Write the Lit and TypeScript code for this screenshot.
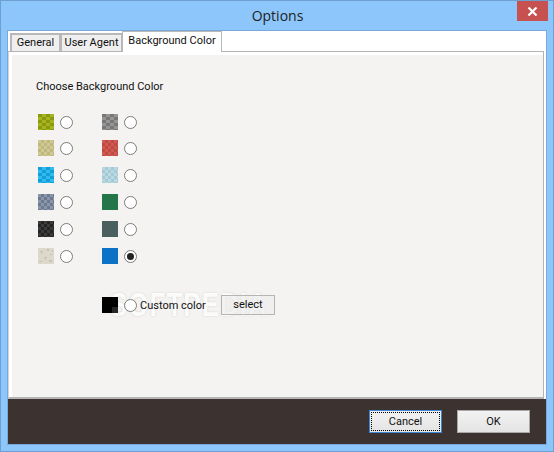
import { LitElement, html, css, svg, nothing } from "lit";
import { customElement } from "lit/decorators.js";

type Sw = { kind: "brick" | "check" | "flat" | "noise"; a: string; b?: string };

const brick = (a: string, b: string): Sw => ({ kind: "brick", a, b });
const check = (a: string, b: string): Sw => ({ kind: "check", a, b });
const flat = (a: string): Sw => ({ kind: "flat", a });

const left: Sw[] = [
  brick("#a6b41f", "#8a9910"),
  check("#d0c993", "#bfb780"),
  brick("#2cbdf0", "#189cd6"),
  check("#8a97aa", "#6c7a90"),
  check("#3c3c3c", "#242424"),
  { kind: "noise", a: "#dcd9cc", b: "#c8c3ac" },
];
const right: Sw[] = [
  brick("#959595", "#777777"),
  check("#d2594f", "#bc4b43"),
  check("#bad9e3", "#a4cad6"),
  flat("#24754a"),
  flat("#4b5f5e"),
  flat("#0b72c6"),
];

function swatch(s: Sw) {
  const cells = [];
  if (s.kind === "brick") {
    for (let r = 0; r < 6; r++) {
      for (let x = r % 2 ? 4 : 0; x < 16; x += 8) {
        cells.push(svg`<rect x="${x}" y="${r * 3}" width="4" height="3" fill="${s.b}"/>`);
      }
    }
  } else if (s.kind === "check") {
    for (let r = 0; r < 6; r++) {
      for (let q = 0; q < 6; q++) {
        if ((r + q) % 2) cells.push(svg`<rect x="${q * 3}" y="${r * 3}" width="3" height="3" fill="${s.b}"/>`);
      }
    }
  } else if (s.kind === "noise") {
    for (const [x, y, w, h] of [[2, 3, 3, 1], [3, 4, 1, 2], [9, 1, 2, 2], [12, 6, 2, 1], [6, 9, 3, 1], [7, 10, 1, 2], [1, 13, 3, 1], [11, 12, 3, 2], [14, 2, 1, 2]]) {
      cells.push(svg`<rect x="${x}" y="${y}" width="${w}" height="${h}" fill="${s.b}"/>`);
    }
  }
  return html`<svg class="sw" width="16" height="16" viewBox="0 0 16 16" shape-rendering="crispEdges"><rect width="16" height="16" fill="${s.a}"/>${cells}</svg>`;
}

@customElement("app-root")
export class AppRoot extends LitElement {
  static styles = css`
    :host { display: block; width: 554px; height: 452px; font-family: Roboto, "Liberation Sans", sans-serif; font-size: 11px; color: #111; }
    * { box-sizing: border-box; }
    .frame { width: 554px; height: 452px; background: #8cc6fa; border: 1px solid #6f9fd0; display: flex; flex-direction: column; padding: 0 6px 6px; }
    .titlebar { height: 29px; flex: none; display: grid; grid-template-columns: 1fr auto 1fr; margin-right: -1px; }
    .title { grid-column: 2; font-family: "Open Sans", sans-serif; font-size: 14px; line-height: 29px; color: #222; }
    .close { grid-column: 3; justify-self: end; width: 31px; height: 20px; background: #c75050; display: flex; align-items: center; justify-content: center; }
    .client { flex: 1; border: 1px solid #78a9da; display: flex; flex-direction: column; background: #fff; min-height: 0; }
    .tabs { height: 20px; flex: none; display: flex; align-items: flex-end; padding-left: 2px; position: relative; z-index: 1; }
    .tab { height: 18px; border: 2px solid #b8b8b8; border-bottom: 0; border-right-width: 1px; background: #efefef; line-height: 16px; text-align: center; }
    .t1 { width: 50px; }
    .t2 { width: 62px; }
    .tab.active { width: 100px; height: 21px; background: #fff; border-width: 1px 1px 0 1px; line-height: 17px; margin-bottom: -1px; }
    .pane { flex: 1; border-top: 1px solid #b4b4b4; border-right: 1px solid #b4b4b4; border-bottom: 2px solid #b4b4b4; border-left: 1px solid #d4d4d4; margin-right: 2px; padding: 3px 0 0 3px; background: #fff; display: flex; min-height: 0; }
    .inner { flex: 1; background: #f4f3f1; padding: 23px 0 0 24px; position: relative; }
    .heading { line-height: 17px; height: 17px; }
    .grid { display: grid; grid-template-columns: 64px auto; grid-template-rows: 15px repeat(5, 16px); margin: 19px 0 0 2px; row-gap: 11px; justify-content: start; }
    .opt { display: flex; align-items: flex-start; gap: 6px; height: 16px; }
    .sw { width: 16px; height: 16px; flex: none; display: block; }
    .radio { width: 13px; height: 13px; margin-top: 2px; flex: none; border: 1.5px solid #7c7c7c; border-radius: 50%; background: #fff; display: flex; align-items: center; justify-content: center; }
    .dot { width: 7px; height: 7px; border-radius: 50%; background: #222; }
    .custom { display: flex; align-items: center; margin: 31px 0 0 66px; height: 20px; position: relative; z-index: 1; }
    .custom .radio { margin: 0 3px 0 6px; }
    .custom-label { width: 81px; }
    .black { background: linear-gradient(#262626, #262626) 10px 10px/6px 6px no-repeat, #000; }
    .select { width: 54px; height: 20px; border: 1px solid #b5b5b5; background: #ececec99; text-align: center; line-height: 18px; }
    .footer { height: 45px; flex: none; background: #3c3230; display: flex; justify-content: flex-end; align-items: flex-start; padding: 11px 16px 0 0; gap: 15px; }
    .btn { width: 73px; height: 23px; background: linear-gradient(#f2f2f2, #e4e4e4); border: 1px solid #a8a8a8; text-align: center; line-height: 21px; }
    .btn.focus { border-color: #3c86d8; outline: 1px dotted #000; outline-offset: -3px; }
    .mark { position: absolute; left: 98px; top: 234px; font: bold 26px/30px "Liberation Sans", sans-serif; letter-spacing: 1px; color: #fbfbfa; transform: scaleY(1.3); text-shadow: 0 0 2px #00000024; pointer-events: none; }
  `;

  private radio(on = false) {
    return html`<span class="radio">${on ? html`<span class="dot"></span>` : nothing}</span>`;
  }

  render() {
    const rows = left.map((l, i) => html`
      <div class="opt">${swatch(l)}${this.radio()}</div>
      <div class="opt">${swatch(right[i])}${this.radio(i === 5)}</div>
    `);
    return html`
      <div class="frame">
        <div class="titlebar">
          <div class="title">Options</div>
          <div class="close">
            <svg width="11" height="9" viewBox="0 0 11 9"><path d="M1.5 .5 9.5 8.5M9.5 .5 1.5 8.5" stroke="#fff" stroke-width="2.2" fill="none"/></svg>
          </div>
        </div>
        <div class="client">
          <div class="tabs">
            <div class="tab t1">General</div>
            <div class="tab t2">User Agent</div>
            <div class="tab active">Background Color</div>
          </div>
          <div class="pane">
            <div class="inner">
              <div class="heading">Choose Background Color</div>
              <div class="grid">${rows}</div>
              <div class="mark">SOFTPEDIA</div>
              <div class="custom">
                <span class="sw black"></span>${this.radio()}
                <span class="custom-label">Custom color</span>
                <span class="select">select</span>
              </div>
            </div>
          </div>
          <div class="footer">
            <div class="btn focus">Cancel</div>
            <div class="btn">OK</div>
          </div>
        </div>
      </div>
    `;
  }
}
